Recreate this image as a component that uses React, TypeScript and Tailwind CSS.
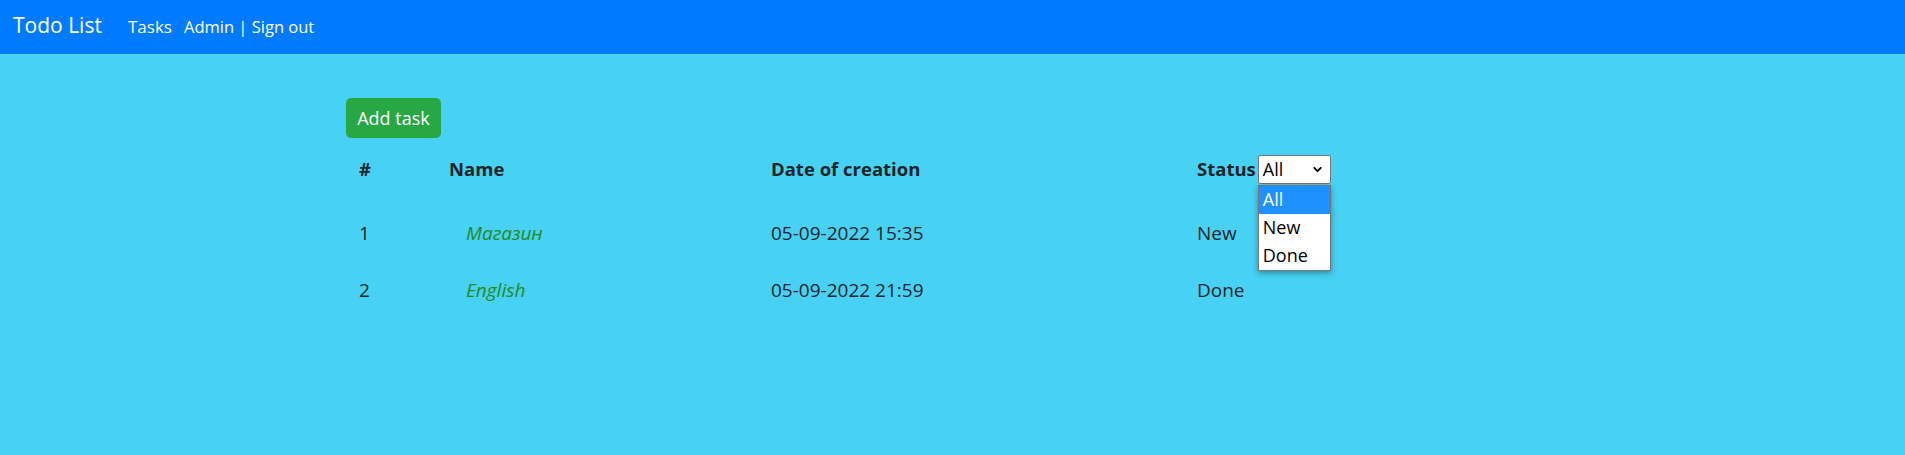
import { ChevronDown } from 'lucide-react';

const tasks = [
    { id: 1, name: 'Магазин', created: '05-09-2022 15:35', status: 'New' },
    { id: 2, name: 'English', created: '05-09-2022 21:59', status: 'Done' },
];

const cols = 'grid grid-cols-[91px_322px_426px_1fr] items-center';

export default function App() {
    return (
        <div className="min-h-[455px] bg-[#47d1f4] font-['Open_Sans',sans-serif] text-[#212529]">
            <nav className="h-[54px] bg-[#007bff] flex items-center px-[13px] text-white">
                <span className="text-[21px] w-[115px] -mt-[2px]">Todo List</span>
                <a className="text-[17px] w-[56px]">Tasks</a>
                <a className="text-[16.5px]">Admin | Sign out</a>
            </nav>

            <div className="pl-[346px] pt-[44px]">
                <button className="bg-[#28a745] text-white text-[18px] rounded-[5px] h-[40px] w-[95px]">
                    Add task
                </button>

                <div className="w-[1213px] mt-[3px]">
                    <div className={`${cols} h-[56px] font-bold text-[18.5px]`}>
                        <div className="pl-[13px]">#</div>
                        <div className="pl-[12px]">Name</div>
                        <div className="pl-[12px]">Date of creation</div>
                        <div className="pl-[12px] flex items-center gap-[2px]">
                            <span>Status</span>
                            <div className="relative">
                                <div className="w-[73px] h-[29px] bg-white border border-[#767676] rounded-[2px] flex items-center justify-between pl-[4px] pr-[6px] font-normal text-[18px] text-[#000]">
                                    <span>All</span>
                                    <ChevronDown size={13} strokeWidth={3.5} />
                                </div>
                                <ul className="absolute left-0 top-[30px] w-[73px] bg-white border border-[#767676] shadow-[0_2px_6px_rgba(0,0,0,0.35)] font-normal text-[18px] text-[#000] z-10">
                                    <li className="h-[28px] flex items-center pl-[4px] bg-[#1e90ff] text-white">All</li>
                                    <li className="h-[28px] flex items-center pl-[4px]">New</li>
                                    <li className="h-[28px] flex items-center pl-[4px]">Done</li>
                                </ul>
                            </div>
                        </div>
                    </div>

                    <div className="mt-[8px]">
                        {tasks.map((t) => (
                            <div key={t.id} className={`${cols} h-[57px] text-[19px]`}>
                                <div className="pl-[13px]">{t.id}</div>
                                <div className="pl-[29px]">
                                    <a className="italic text-[#228b22]">{t.name}</a>
                                </div>
                                <div className="pl-[12px]">{t.created}</div>
                                <div className="pl-[12px]">{t.status}</div>
                            </div>
                        ))}
                    </div>
                </div>
            </div>
        </div>
    );
}
